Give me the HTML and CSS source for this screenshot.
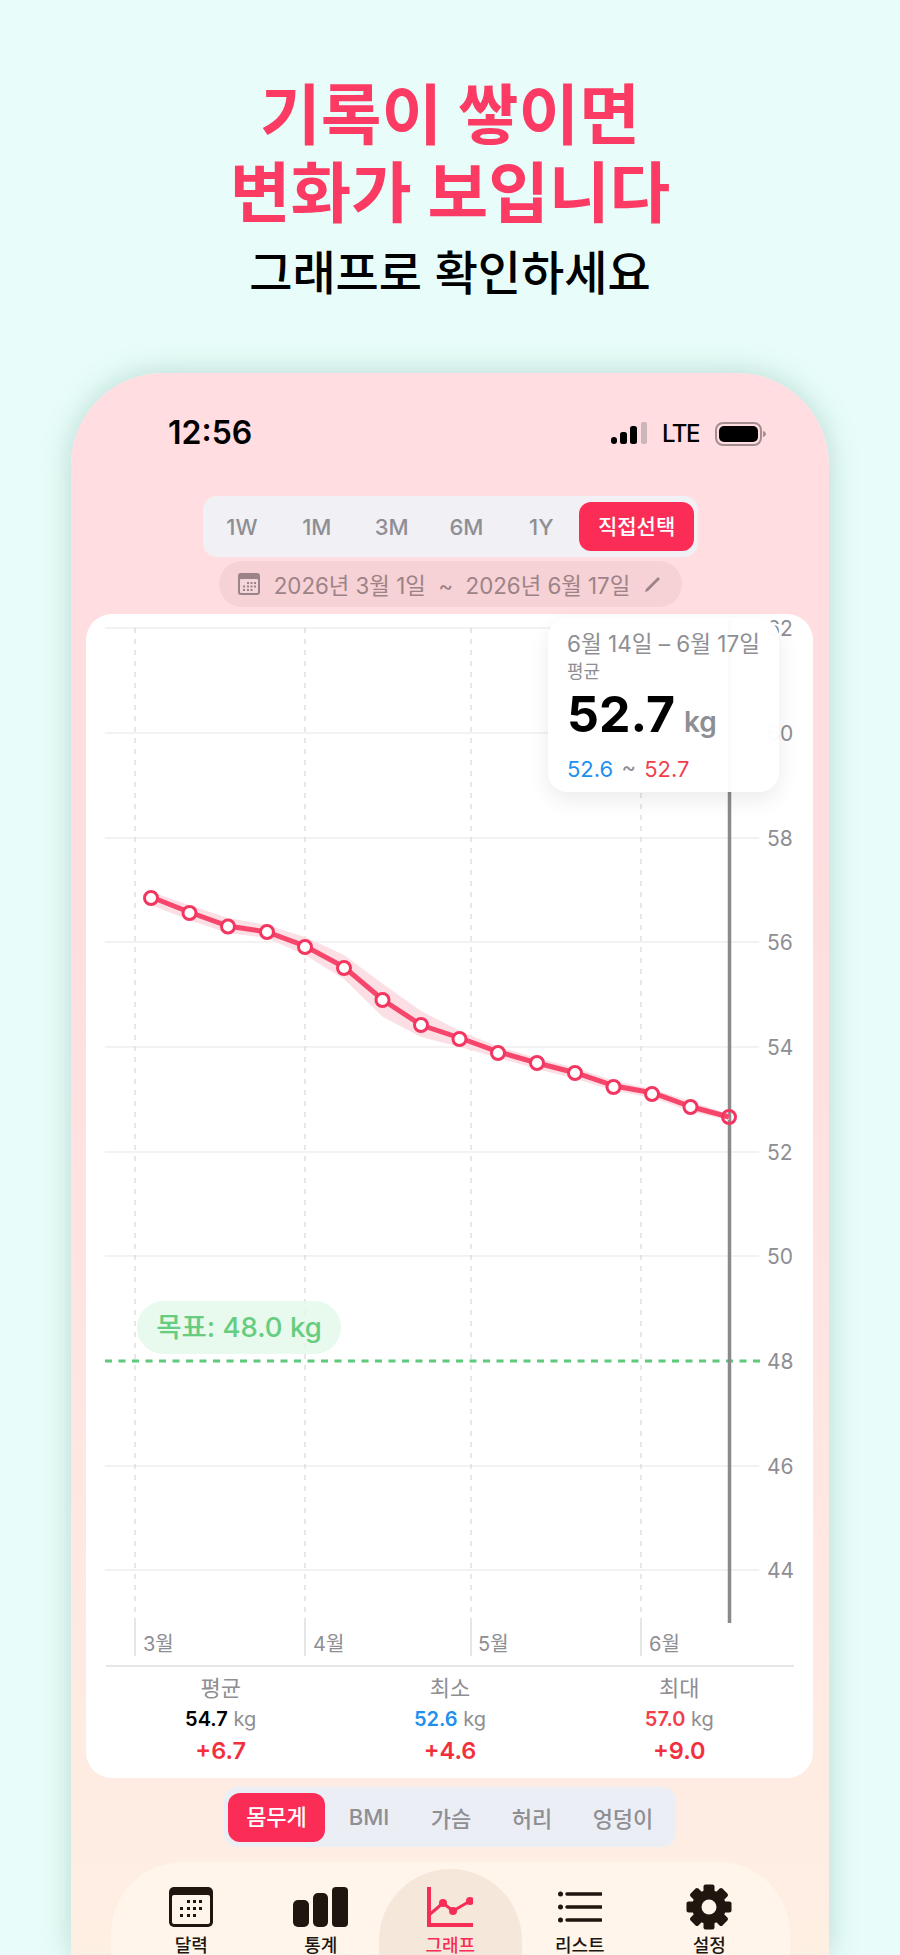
FILE: index.html
```html
<!DOCTYPE html>
<html>

<head>
    <meta charset="utf-8">
    <title>그래프</title>
    <link rel="stylesheet" href="styles.css">
</head>

<body>

    <div class="hero">
        <h1>기록이 쌓이면<br>변화가 보입니다</h1>
        <h2>그래프로 확인하세요</h2>
    </div>

    <div class="phone">

        <div class="status">
            <span class="clock">12:56</span>
            <div class="status-right">
                <svg class="signal" width="36" height="22" viewBox="0 0 36 22">
                    <rect x="0" y="15" width="6" height="7" rx="3" fill="#000"/>
                    <rect x="9" y="10" width="7" height="12" rx="2.5" fill="#000"/>
                    <rect x="19" y="4" width="7" height="18" rx="2.5" fill="#000"/>
                    <rect x="30" y="0" width="6" height="22" rx="2" fill="#cdb6b9"/>
                </svg>
                <span class="lte">LTE</span>
                <svg class="battery" width="51" height="24" viewBox="0 0 51 24">
                    <rect x="1" y="1" width="45" height="22" rx="7" fill="none" stroke="#a58e90" stroke-width="2"/>
                    <rect x="4" y="4" width="39" height="16" rx="5" fill="#000"/>
                    <path d="M48 9 C50 9.5 51 11 51 12 C51 13 50 14.5 48 15 Z" fill="#a58e90"/>
                </svg>
            </div>
        </div>

        <div class="seg seg-range">
            <span class="seg-item">1W</span>
            <span class="seg-item">1M</span>
            <span class="seg-item">3M</span>
            <span class="seg-item">6M</span>
            <span class="seg-item">1Y</span>
            <span class="seg-item active">직접선택</span>
        </div>

        <div class="date-pill">
            <svg width="22" height="22" viewBox="0 0 22 22">
                <rect x="0" y="0" width="22" height="22" rx="3" fill="#9c8387"/>
                <rect x="2" y="6" width="18" height="14" rx="1" fill="#f3d6d9"/>
                <g fill="#9c8387">
                    <rect x="9" y="9" width="2" height="2"/><rect x="12.5" y="9" width="2" height="2"/><rect x="16" y="9" width="2" height="2"/>
                    <rect x="5" y="12.5" width="2" height="2"/><rect x="9" y="12.5" width="2" height="2"/><rect x="12.5" y="12.5" width="2" height="2"/><rect x="16" y="12.5" width="2" height="2"/>
                    <rect x="5" y="16" width="2" height="2"/><rect x="9" y="16" width="2" height="2"/><rect x="12.5" y="16" width="2" height="2"/>
                </g>
            </svg>
            <span>2026년 3월 1일 &nbsp;~&nbsp; 2026년 6월 17일</span>
            <svg width="18" height="18" viewBox="0 0 18 18">
                <path d="M1 17 L2 14 L14 2 L16 4 L4 16 Z" fill="#9c8387"/>
            </svg>
        </div>

        <div class="card">

            <!-- chart drawn in page coordinates -->
            <svg class="chart" width="728" height="1051" viewBox="86 614 728 1051">
                <g class="grid-h">
                    <line x1="105" x2="759" y1="628" y2="628"/>
                    <line x1="105" x2="759" y1="733" y2="733"/>
                    <line x1="105" x2="759" y1="838" y2="838"/>
                    <line x1="105" x2="759" y1="942" y2="942"/>
                    <line x1="105" x2="759" y1="1047" y2="1047"/>
                    <line x1="105" x2="759" y1="1152" y2="1152"/>
                    <line x1="105" x2="759" y1="1256" y2="1256"/>
                    <line x1="105" x2="759" y1="1466" y2="1466"/>
                    <line x1="105" x2="759" y1="1570" y2="1570"/>
                </g>
                <g class="grid-v">
                    <line x1="135" x2="135" y1="628" y2="1623"/>
                    <line x1="305" x2="305" y1="628" y2="1623"/>
                    <line x1="471" x2="471" y1="628" y2="1623"/>
                    <line x1="641" x2="641" y1="628" y2="1623"/>
                </g>
                <g class="grid-tick">
                    <line x1="135" x2="135" y1="1623" y2="1656"/>
                    <line x1="305" x2="305" y1="1623" y2="1656"/>
                    <line x1="471" x2="471" y1="1623" y2="1656"/>
                    <line x1="641" x2="641" y1="1623" y2="1656"/>
                </g>

                <g class="y-label">
                    <text x="767" y="636">62</text>
                    <text x="767" y="741">60</text>
                    <text x="767" y="846">58</text>
                    <text x="767" y="950">56</text>
                    <text x="767" y="1055">54</text>
                    <text x="767" y="1160">52</text>
                    <text x="767" y="1264">50</text>
                    <text x="767" y="1369">48</text>
                    <text x="767" y="1474">46</text>
                    <text x="767" y="1578">44</text>
                </g>
                <g class="x-label">
                    <text x="143" y="1651">3월</text>
                    <text x="313" y="1651">4월</text>
                    <text x="478" y="1651">5월</text>
                    <text x="649" y="1651">6월</text>
                </g>

                <line class="goal-line" x1="105" x2="761" y1="1361" y2="1361"/>
                <line class="cursor" x1="729.5" x2="729.5" y1="620" y2="1623"/>

                <polygon class="band" points="151,892 189,905 228,918 267,925 305,937 344,955 383,984 421,1011 460,1031 499,1047 537,1058 576,1068 615,1081 653,1089 692,1102 729,1114 729,1120 692,1112 653,1098 615,1091 576,1079 537,1069 499,1058 460,1047 421,1037 383,1017 344,979 305,955 267,938 228,933 189,920 151,905"/>
                <polyline class="trend" points="151,897 189,912 228,926 267,932 305,946 344,967 383,1000 421,1025 460,1038 499,1052 537,1063 576,1073 615,1086 653,1093 692,1107 729,1117"/>
                <g class="dots">
                    <circle cx="151" cy="898" r="6.5"/>
                    <circle cx="189.5" cy="913" r="6.5"/>
                    <circle cx="228" cy="926.5" r="6.5"/>
                    <circle cx="267" cy="932" r="6.5"/>
                    <circle cx="305" cy="947" r="6.5"/>
                    <circle cx="344" cy="968" r="6.5"/>
                    <circle cx="382.5" cy="1000" r="6.5"/>
                    <circle cx="421" cy="1025" r="6.5"/>
                    <circle cx="459.5" cy="1039" r="6.5"/>
                    <circle cx="498" cy="1053" r="6.5"/>
                    <circle cx="537" cy="1063" r="6.5"/>
                    <circle cx="575" cy="1073" r="6.5"/>
                    <circle cx="613.5" cy="1087" r="6.5"/>
                    <circle cx="652" cy="1094" r="6.5"/>
                    <circle cx="690.5" cy="1107" r="6.5"/>
                    <circle cx="729" cy="1117" r="6.5" class="dot-last"/>
                </g>
            </svg>

            <div class="goal-tag">목표: 48.0 kg</div>

            <div class="tip">
                <div class="tip-date">6월 14일 – 6월 17일</div>
                <div class="tip-sub">평균</div>
                <div class="tip-value">52.7<span>kg</span></div>
                <div class="tip-range"><b class="blue">52.6</b> ~ <b class="red">52.7</b></div>
            </div>

            <div class="stats">
                <div class="stat">
                    <div class="stat-label">평균</div>
                    <div class="stat-value"><b>54.7</b> kg</div>
                    <div class="stat-diff">+6.7</div>
                </div>
                <div class="stat">
                    <div class="stat-label">최소</div>
                    <div class="stat-value"><b class="blue">52.6</b> kg</div>
                    <div class="stat-diff">+4.6</div>
                </div>
                <div class="stat">
                    <div class="stat-label">최대</div>
                    <div class="stat-value"><b class="red">57.0</b> kg</div>
                    <div class="stat-diff">+9.0</div>
                </div>
            </div>

        </div>

        <div class="seg seg-metric">
            <span class="seg-item active">몸무게</span>
            <span class="seg-item">BMI</span>
            <span class="seg-item">가슴</span>
            <span class="seg-item">허리</span>
            <span class="seg-item">엉덩이</span>
        </div>

        <div class="tabs">
            <div class="tab">
                <svg width="44" height="40" viewBox="0 0 44 40">
                    <rect width="44" height="40" rx="5" fill="#20150f"/>
                    <rect x="3" y="8" width="38" height="29" rx="2" fill="#fff5ea"/>
                    <g fill="#20150f">
                        <rect x="18" y="13" width="3" height="3"/><rect x="24" y="13" width="3" height="3"/><rect x="30" y="13" width="3" height="3"/>
                        <rect x="11" y="20" width="3" height="3"/><rect x="18" y="20" width="3" height="3"/><rect x="24" y="20" width="3" height="3"/><rect x="30" y="20" width="3" height="3"/>
                        <rect x="11" y="27" width="3" height="3"/><rect x="18" y="27" width="3" height="3"/><rect x="24" y="27" width="3" height="3"/>
                    </g>
                </svg>
                <span>달력</span>
            </div>
            <div class="tab">
                <svg width="55" height="40" viewBox="0 0 55 40">
                    <rect x="0" y="13" width="16" height="27" rx="5" fill="#20150f"/>
                    <rect x="20" y="6" width="15" height="34" rx="5" fill="#20150f"/>
                    <rect x="39" y="0" width="16" height="40" rx="4" fill="#20150f"/>
                </svg>
                <span>통계</span>
            </div>
            <div class="tab tab-on">
                <svg width="46" height="40" viewBox="0 0 46 40">
                    <path d="M2 0 V38 H46" fill="none" stroke="#f62d56" stroke-width="4"/>
                    <polyline points="2,28 16,16 26,24 43,14 46,12" fill="none" stroke="#f62d56" stroke-width="3"/>
                    <circle cx="16" cy="16" r="4" fill="#f62d56"/>
                    <circle cx="26" cy="24" r="4" fill="#f62d56"/>
                    <circle cx="43" cy="14" r="4" fill="#f62d56"/>
                </svg>
                <span>그래프</span>
            </div>
            <div class="tab">
                <svg width="44" height="40" viewBox="0 0 44 40">
                    <circle cx="2.5" cy="7" r="2.5" fill="#20150f"/>
                    <circle cx="2.5" cy="20" r="2.5" fill="#20150f"/>
                    <circle cx="2.5" cy="33" r="2.5" fill="#20150f"/>
                    <path d="M9 7 H43 M9 20 H43 M9 33 H43" stroke="#20150f" stroke-width="3.5" stroke-linecap="round"/>
                </svg>
                <span>리스트</span>
            </div>
            <div class="tab">
                <svg width="46" height="46" viewBox="-23 -23 46 46" class="gear">
                    <g fill="#20150f">
                        <circle r="17"/>
                        <rect x="-5.5" y="-22.5" width="11" height="45" rx="2"/>
                        <rect x="-5.5" y="-22.5" width="11" height="45" rx="2" transform="rotate(45)"/>
                        <rect x="-5.5" y="-22.5" width="11" height="45" rx="2" transform="rotate(90)"/>
                        <rect x="-5.5" y="-22.5" width="11" height="45" rx="2" transform="rotate(135)"/>
                    </g>
                    <circle r="7.5" fill="#fff5ea"/>
                </svg>
                <span>설정</span>
            </div>
        </div>

    </div>

</body>

</html>
```

FILE: styles.css
```css
html, body {
    margin: 0;
    height: 1955px;
    overflow: hidden;
}

body {
    background-color: #e8fdf9;
    font-family: Inter, "Noto Sans CJK KR", sans-serif;
}

.hero {
    height: 373px;
    box-sizing: border-box;
    padding-top: 76px;
    text-align: center;
}

h1 {
    margin: 0;
    color: #fb3b63;
    font-size: 66px;
    line-height: 78px;
    font-weight: 700;
}

h2 {
    margin: 11px 0 0;
    color: #000000;
    font-size: 47px;
    line-height: 60px;
    font-weight: 500;
}

.phone {
    width: 758px;
    height: 1582px;
    margin: 0 auto;
    border-radius: 92px 92px 0 0;
    background: linear-gradient(#ffdde0, #ffdee0 35%, #feefe3);
    box-shadow: 0 0 30px rgba(70, 130, 120, 0.3);
    overflow: hidden;
}

.status {
    height: 123px;
    box-sizing: border-box;
    padding: 49px 63px 0 97px;
    display: flex;
    justify-content: space-between;
}

.clock {
    font-size: 32px;
    line-height: 22px;
    height: 22px;
    font-weight: 600;
    color: #000;
}

.status-right {
    display: flex;
    align-items: flex-start;
    height: 24px;
}

.lte {
    margin-left: 15px;
    margin-right: 16px;
    font-size: 24px;
    line-height: 24px;
    letter-spacing: -1.5px;
    font-weight: 500;
    color: #000;
}

.seg {
    display: flex;
    box-sizing: border-box;
    margin: 0 auto;
    align-items: center;
    color: #8e8e93;
    font-weight: 500;
}

.seg-range {
    width: 495px;
    height: 61px;
    background-color: #f0f0f5;
    border-radius: 14px;
    padding: 0 3px 0 0;
    font-size: 22px;
}

.seg-item {
    text-align: center;
}

.seg-item.active {
    background-color: #fb2d57;
    color: #ffffff;
    border-radius: 12px;
    font-weight: 500;
}

.seg-range .seg-item { width: 75px; }
.seg-range .seg-item:first-child { margin-left: 2px; }
.seg-range .seg-item.active {
    width: 116px;
    height: 49px;
    line-height: 49px;
    margin-left: 0;
    font-size: 21px;
}

.date-pill {
    display: flex;
    align-items: center;
    justify-content: center;
    gap: 14px;
    width: 463px;
    height: 46px;
    margin: 4px auto 0;
    border-radius: 23px;
    background-color: rgba(170, 110, 115, 0.1);
    color: #9c8387;
    font-size: 22.3px;
    white-space: nowrap;
}

.card {
    position: relative;
    height: 1164px;
    margin: 7px 16px 0 15px;
    border-radius: 26px;
    background-color: #ffffff;
}

.chart {
    display: block;
}

.grid-h line { stroke: #e5e5e7; stroke-width: 1.2; }
.grid-v line { stroke: #d8d8da; stroke-width: 1.2; stroke-dasharray: 5 6; }
.grid-tick line { stroke: #dcdcde; stroke-width: 1.5; }

.y-label text, .x-label text {
    fill: #8e8e93;
    font-size: 21px;
}

.x-label text { font-size: 20px; }

.goal-line {
    stroke: #5fc97c;
    stroke-width: 3;
    stroke-dasharray: 7 6.5;
}

.cursor {
    stroke: #8a8a8a;
    stroke-width: 3.5;
}

.band { fill: #fbdfe4; }

.trend {
    fill: none;
    stroke: #f7466c;
    stroke-width: 5;
}

.dots circle {
    fill: #ffffff;
    stroke: #f2365f;
    stroke-width: 3;
}

.dots .dot-last { fill: none; }

.goal-tag {
    position: absolute;
    left: 51px;
    top: 687px;
    width: 204px;
    height: 53px;
    line-height: 53px;
    text-align: center;
    border-radius: 27px;
    background-color: rgba(226, 247, 232, 0.8);
    color: #66cc80;
    font-size: 27.5px;
    font-weight: 500;
    white-space: nowrap;
}

.tip {
    position: absolute;
    left: 462px;
    top: 4px;
    width: 231px;
    height: 174px;
    box-sizing: border-box;
    padding: 11px 0 0 19px;
    border-radius: 20px;
    background-color: rgba(255, 255, 255, 0.97);
    box-shadow: 0 8px 22px rgba(0, 0, 0, 0.08);
    color: #8e8e93;
}

.tip-date { font-size: 22.5px; line-height: 29px; white-space: nowrap; }
.tip-sub { font-size: 18px; line-height: 22px; margin-top: 3px; }

.tip-value {
    margin-top: 1px;
    color: #000;
    font-size: 50px;
    line-height: 60px;
    font-weight: 700;
}

.tip-value span {
    margin-left: 9px;
    color: #8e8e93;
    font-size: 28px;
    font-weight: 600;
}

.tip-range { font-size: 22px; line-height: 28px; margin-top: 3px; word-spacing: 2px; }
.tip-range b { font-weight: 400; }

.blue { color: #1e90f0; }
.red { color: #f23f4c; }

.stats {
    display: grid;
    grid-template-columns: repeat(3, 1fr);
    margin: 0 19px 0 20px;
    border-top: 2px solid #e6e6e8;
    padding-top: 7px;
    text-align: center;
    color: #8e8e93;
}

.stat-label { font-size: 22px; line-height: 28px; }
.stat-value { font-size: 20px; line-height: 28px; margin-top: 3px; }
.stat-value b { color: #000; font-weight: 600; }
.stat-value b.blue { color: #1e90f0; }
.stat-value b.red { color: #f23f4c; }

.stat-diff {
    margin-top: 3px;
    color: #f2303d;
    font-size: 23.5px;
    line-height: 30px;
    font-weight: 600;
}

.seg-metric {
    width: 452px;
    height: 60px;
    margin-top: 9px;
    background-color: #ebeff5;
    border-radius: 14px;
    padding-left: 4px;
    font-size: 22px;
}

.seg-metric .seg-item.active {
    width: 97px;
    height: 49px;
    line-height: 49px;
}

.seg-metric .seg-item:nth-child(2) { width: 88px; }
.seg-metric .seg-item:nth-child(3) { width: 76px; }
.seg-metric .seg-item:nth-child(4) { width: 86px; }
.seg-metric .seg-item:nth-child(5) { width: 96px; }

.tabs {
    display: grid;
    grid-template-columns: repeat(5, 129.5px);
    width: 679px;
    height: 200px;
    margin: 15px auto 0;
    padding: 7px 0 0 16px;
    box-sizing: border-box;
    border-radius: 72px 72px 0 0;
    background-color: #fff5ea;
}

.tab {
    height: 100%;
    display: flex;
    flex-direction: column;
    align-items: center;
    padding-top: 18px;
    box-sizing: border-box;
    color: #20150f;
    font-size: 18px;
    font-weight: 500;
}

.tab span { margin-top: 7px; line-height: 24px; }

.tab .gear { margin: -3px 0 -3px; }

.tab-on {
    margin: 0 -7px;
    border-radius: 72px;
    background-color: #f6e7db;
    color: #f62d56;
}
```
